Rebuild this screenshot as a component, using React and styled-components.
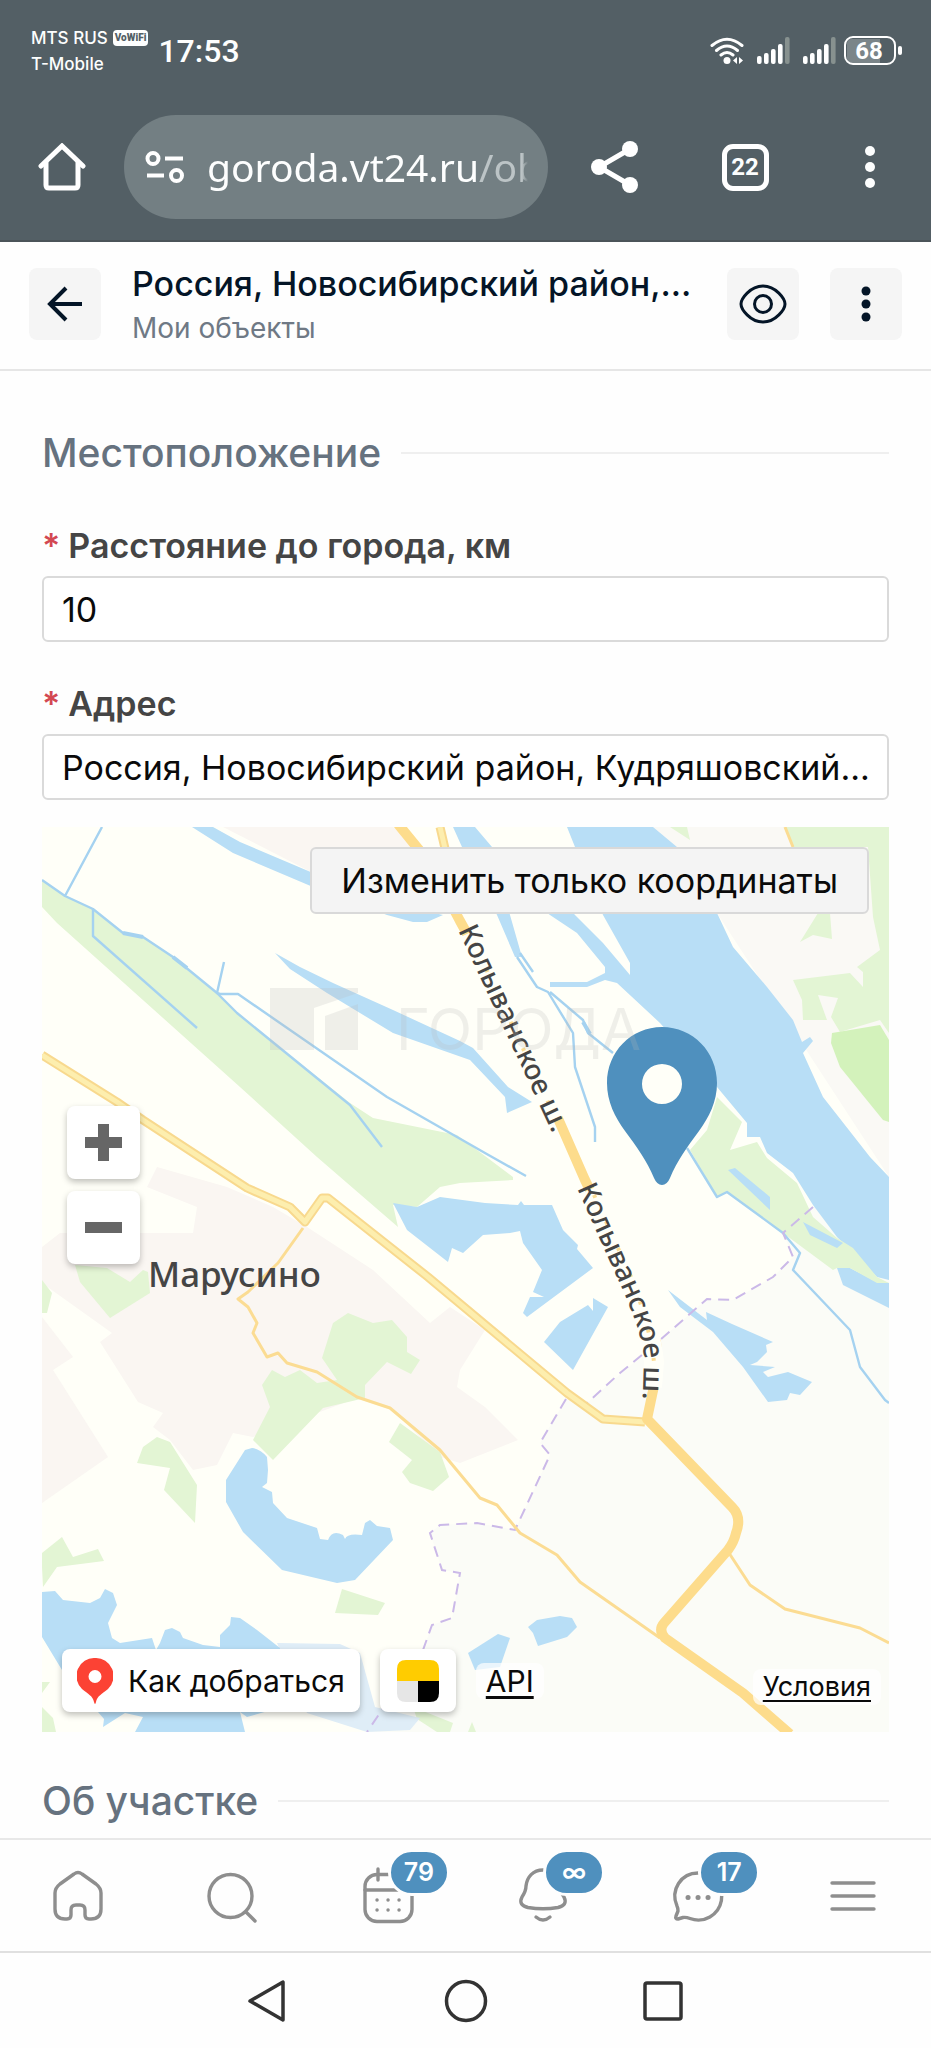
import styled, { createGlobalStyle } from 'styled-components'

const GlobalStyle = createGlobalStyle`
  * {
    box-sizing: border-box;
  }

  body {
    margin: 0;
    background: #fefefe;
    font-family: Inter, "Liberation Sans", sans-serif;
  }

  button, input {
    font-family: inherit;
    margin: 0;
  }
`

const Page = styled.div`
  display: flex;
  flex-direction: column;
  min-height: 100vh;
`

/* phone status bar and browser toolbar */

const BrowserTop = styled.header`
  background: #535f65;
  color: #fdfefe;
  font-family: Roboto, sans-serif;
  border-bottom: 2px solid #4b5459;
`

const StatusBar = styled.div`
  display: flex;
  align-items: center;
  height: 100px;
  padding: 2px 29px 0 31px;
`

const Carriers = styled.div`
  display: flex;
  flex-direction: column;
  font-family: Inter, sans-serif;
  font-size: 17px;
  font-weight: 500;
  line-height: 26px;
`

const Carrier = styled.div`
  display: flex;
  align-items: center;
  gap: 5px;
`

const WifiTag = styled.span`
  padding: 0 2px;
  border-radius: 4px;
  background: #fdfefe;
  color: #535f65;
  font-family: Roboto, sans-serif;
  font-size: 10px;
  font-weight: 900;
  line-height: 16px;
`

const Clock = styled.time`
  margin-left: 10px;
  font-size: 32px;
  font-weight: 500;
`

const StatusIcons = styled.div`
  display: flex;
  align-items: center;
  gap: 13px;
  margin-left: auto;
`

const Battery = styled.svg`
  margin-left: -5px;
`

const Toolbar = styled.div`
  display: grid;
  grid-template-columns: 124px 1fr 134px 126px 123px;
  align-items: center;
  padding: 15px 0 21px;
`

const ToolButton = styled.button`
  display: flex;
  justify-content: center;
  align-items: center;
  height: 104px;
  padding: 0;
  border: 0;
  background: none;
  color: inherit;
`

const TabCount = styled.span`
  width: 47px;
  height: 47px;
  border: 5px solid #fff;
  border-radius: 11px;
  font-size: 24px;
  font-weight: 700;
  line-height: 37px;
  text-align: center;
`

const AddressPill = styled.div`
  display: flex;
  align-items: center;
  gap: 22px;
  height: 104px;
  min-width: 0;
  padding: 0 20px 0 21px;
  border-radius: 52px;
  background: #737f83;
`

const Url = styled.div`
  flex: 1;
  overflow: hidden;
  white-space: nowrap;
  font-family: "Noto Sans", sans-serif;
  font-size: 39px;
  line-height: 60px;
  mask-image: linear-gradient(to left, transparent, #000 6px);

  span {
    color: #bcc4c6;
  }
`

/* app header */

const AppHeader = styled.header`
  display: flex;
  align-items: center;
  gap: 31px;
  padding: 22px 29px 25px;
  border-bottom: 2px solid #e6e6e6;
`

const SquareButton = styled.button`
  display: flex;
  flex: none;
  justify-content: center;
  align-items: center;
  width: 72px;
  height: 72px;
  padding: 0;
  border: 0;
  border-radius: 8px;
  background: #f5f5f5;
  color: #041527;
`

const Titles = styled.div`
  flex: 1;
  min-width: 0;
`

const Title = styled.h1`
  margin: 0;
  overflow: hidden;
  color: #041527;
  font-size: 34px;
  font-weight: 500;
  line-height: 40px;
  text-overflow: ellipsis;
  white-space: nowrap;
`

const Subtitle = styled.p`
  margin: 8px 0 0;
  color: #6f7985;
  font-size: 28px;
  line-height: 32px;
`

/* form */

const Form = styled.main`
  flex: 1;
  padding: 56px 42px 11px;
`

const SectionTitle = styled.h2`
  display: flex;
  align-items: center;
  gap: 20px;
  margin: 0;
  color: #66727f;
  font-size: 39px;
  font-weight: 500;
  line-height: 52px;

  &::after {
    content: '';
    flex: 1;
    height: 2px;
    background: #efefef;
  }
`

const Fields = styled.div`
  display: grid;
  gap: 40px;
  margin: 45px 0 27px;
`

const Field = styled.div`
  display: flex;
  flex-direction: column;
  gap: 8px;
`

const Label = styled.label`
  color: #454545;
  font-size: 34px;
  font-weight: 600;
  line-height: 44px;

  &::before {
    content: '*';
    margin-right: 8px;
    color: #d34852;
  }
`

const Input = styled.input`
  width: 100%;
  height: 66px;
  padding: 0 8px 0 18px;
  border: 2px solid #dadada;
  border-radius: 6px;
  background: #fff;
  color: #0a0a0a;
  font-size: 34px;
  text-overflow: ellipsis;
`

/* map */

const MapFrame = styled.section`
  position: relative;
  aspect-ratio: 847 / 905;
  margin-bottom: 43px;
  overflow: hidden;
  font-family: "Noto Sans", sans-serif;
`

const MapCanvas = styled.svg`
  display: block;
  width: 100%;
  height: 100%;
`

const EditCoords = styled.button`
  position: absolute;
  top: 20px;
  right: 20px;
  height: 67px;
  padding: 0 29px;
  border: 2px solid #d9d9d9;
  border-radius: 6px;
  background: #f4f4f4;
  color: #0a0a0a;
  font-family: Inter, sans-serif;
  font-size: 34px;
`

const Zoom = styled.div`
  position: absolute;
  top: 279px;
  left: 25px;
  display: grid;
  gap: 12px;
`

const ZoomButton = styled.button`
  display: flex;
  justify-content: center;
  align-items: center;
  width: 73px;
  height: 73px;
  padding: 0;
  border: 0;
  border-radius: 8px;
  background: #fff;
  box-shadow: 0 3px 6px rgba(0, 0, 0, 0.25);
`

const MapFooter = styled.div`
  position: absolute;
  right: 8px;
  bottom: 20px;
  left: 20px;
  display: flex;
  align-items: center;
`

const MapChip = styled.button`
  display: flex;
  align-items: center;
  gap: 15px;
  height: 63px;
  margin-right: 20px;
  padding: 0 15px;
  border: 0;
  border-radius: 8px;
  background: #fff;
  color: #0a0a0a;
  font-family: Inter, sans-serif;
  font-size: 30px;
  box-shadow: 0 3px 6px rgba(0, 0, 0, 0.25);
`

const MapLink = styled.a`
  margin: ${({ $end }) => ($end ? '12px 0 0 auto' : '0')};
  padding: 0 10px;
  border-radius: 8px;
  background: rgba(255, 255, 255, 0.7);
  color: #0a0a0a;
  font-family: Inter, sans-serif;
  font-size: ${({ $end }) => ($end ? '27px' : '30px')};
  line-height: 36px;
  text-underline-offset: 4px;
`

/* bottom bars */

const TabBar = styled.nav`
  position: sticky;
  bottom: 0;
  display: grid;
  grid-template-columns: repeat(6, 1fr);
  height: 115px;
  border-top: 2px solid #e8e8e8;
  border-bottom: 2px solid #e0e0e0;
  background: #fefefe;
`

const TabLink = styled.a`
  position: relative;
  display: flex;
  justify-content: center;
  align-items: center;
  color: #8e8e8e;
`

const Badge = styled.span`
  position: absolute;
  top: 9px;
  left: 50%;
  width: 62px;
  height: 47px;
  border: 3px solid #fefefe;
  border-radius: 24px;
  background: #4f90be;
  color: #fff;
  font-size: 25px;
  font-weight: 600;
  line-height: 41px;
  text-align: center;
`

const SystemBar = styled.div`
  display: flex;
  justify-content: center;
  gap: 151px;
  height: 95px;
  background: #fefefe;
`

const SystemButton = styled.button`
  display: flex;
  align-items: center;
  padding: 0;
  border: 0;
  background: none;
  color: #333;
`

const Signal = () => (
  <svg width="33" height="28" viewBox="0 0 33 28" aria-hidden="true">
    {[8, 11, 15, 20, 27].map((h, i) => (
      <rect key={h} x={i * 7} y={27 - h} width="4.6" height={h} rx="2" fill={i === 4 ? '#87918f' : '#fff'} />
    ))}
  </svg>
)

const Dots = ({ step, r }) => (
  <svg width="16" height="50" viewBox="0 0 16 50" fill="currentColor" aria-hidden="true">
    <circle cx="8" cy={25 - step} r={r} />
    <circle cx="8" cy="25" r={r} />
    <circle cx="8" cy={25 + step} r={r} />
  </svg>
)

const TabIcon = ({ children }) => (
  <svg width="60" height="60" viewBox="0 0 60 60" fill="none" stroke="currentColor" strokeWidth="3.4" strokeLinecap="round" strokeLinejoin="round" aria-hidden="true">
    {children}
  </svg>
)

const SystemIcon = ({ children }) => (
  <svg width="46" height="46" viewBox="0 0 46 46" fill="none" stroke="currentColor" strokeWidth="3.5" strokeLinejoin="round" aria-hidden="true">
    {children}
  </svg>
)

const WATER = [
  'M525 0H611L635 20L675 86L691 120L725 160L751 193L760 215L768 210L771 214L761 226L781 270L828 330L847 350V453L835 450L795 410L771 378L751 346L725 326L718 310L705 310V296L675 260L618 196L575 156L563 153L545 160H508V155H545L563 146V140L535 106L508 88L470 60H510L533 88L561 116L588 148V136L561 88L533 20Z',
  'M411 0H433L450 20L468 88L480 130L473 130L455 88L420 20Z',
  'M150 0H171L198 15L271 46L345 75L401 88L385 95H371L345 88L271 60L191 26Z',
  'M233 126L258 140L291 156L351 183L418 214L431 221L466 260L490 275L465 286L463 270L428 233L351 206L285 166L248 142Z',
  'M351 376L375 380L398 370L443 376L476 378L479 374L482 378H510L521 403L536 418L535 422L551 441L485 490L481 486L488 470L502 470L491 465L500 443L481 416L478 404L468 406L441 408L421 426L410 421L406 435L365 403Z',
  'M551 471L566 480L531 543L502 515L518 495L546 478L551 484Z',
  'M626 463L665 493L664 485L690 497L731 515L724 518L725 525L715 535L708 538L733 540L721 545L726 550L746 545L770 555L758 568L748 566L745 573L726 575L701 540L671 505L638 480Z',
  'M795 441H808L835 455L847 456V481L801 458Z',
  'M210 621Q218 622 225 630L226 643L225 656L220 660L230 665L231 676L245 691L275 701L278 712L286 713Q290 702 301 708L303 712Q305 706 320 708L323 696L328 693L335 699L348 701L351 713L313 753L295 756L240 743L201 705L184 675V653L203 623Z',
  'M0 765L13 764L21 773L48 776L58 771L63 762L71 766L75 778L66 796L70 811L78 816L110 811L114 823L118 816L123 803L130 801L138 805L141 811L161 818L178 820V808L188 798L189 790L198 791L215 803L238 821L240 880L205 890L198 885L203 905H93L101 890L83 886L61 900L62 892L20 843L0 810Z',
  'M456 807L468 811L458 840L433 843L426 826Z',
  'M486 800L495 793L518 789L530 791L535 800L525 810L496 819L491 806Z',
]

const GREEN = [
  'M0 53L23 69L51 82L81 106L101 110L131 130L175 166L195 186L308 276L331 291L415 308L471 350V353L418 356L398 360L375 380L351 378L356 400L275 330L198 260L15 96L0 80Z',
  'M33 438L65 441L88 455L101 443L106 445L108 466L68 491L38 455Z',
  'M0 453L10 466L5 486H0Z',
  'M306 486L331 496L350 493L365 510V525L378 533L369 547L345 535L323 558V571L281 581L231 633L211 613L228 580L220 558L230 543L243 550L258 543L275 556L295 553L280 531L291 496Z',
  'M115 610L128 615L155 658L153 696L122 663L128 641L95 636L101 620Z',
  'M358 596L398 625L407 650L391 664L368 656L360 645L370 633L347 615Z',
  'M0 726L20 710L31 730L56 722L62 734L15 740L1 760L0 740Z',
  'M300 762L343 776L336 788L293 786Z',
  'M371 880L411 896L408 905H395L375 892Z',
  'M0 880L11 891L14 905H0ZM0 855H8L0 866Z',
  'M426 905L430 895L434 905Z',
  'M743 0H847V206L838 193L798 205L789 190L796 171L776 168L785 193H761L760 173L751 153L808 146L821 160V145L815 140L838 123L831 90L826 20H751Z',
  'M776 86H788L790 112L771 108L758 115ZM628 0H645L648 13Z',
]

const GREENBELT = 'M675 270L700 295L688 323L715 315L725 331L755 356L771 390L795 411L811 421L835 450L847 456H835L808 441H795L791 443L741 406L685 366L675 370L648 323L665 303Z'

const BORDER = 'M771 380L741 406L751 430L731 450L691 473L665 472L618 513L578 546L545 576'
const BORDER_WEST = 'M524 572L498 616L508 628L473 703L435 696L398 698L388 706L400 743L418 746L410 791L390 798L381 823L340 883L325 905'

const WEST_ROAD = 'M0 228L75 275L101 293L205 361L248 380L263 395L280 371H286L386 450L525 566L561 592L603 595M398 0L405 30'

const MapDrawing = () => (
  <MapCanvas viewBox="0 0 847 905" preserveAspectRatio="xMidYMid slice" role="img" aria-label="Карта">
    <rect width="847" height="905" fill="#fffff8" />
    <path fill="#fbfcf7" d="M771 380L741 406L751 430L731 450L691 473L665 472L618 513L545 576L524 572L498 616L508 628L473 703L435 696L398 698L388 706L400 743L418 746L410 791L390 798L381 823L325 905H847V380Z" />
    <path fill="#faf9f5" d="M611 0H847V350L675 86Z" />
    <g fill="#faf6f2">
      <path d="M181 0H351L381 21L271 46Z" />
      <path d="M115 340L185 360L231 380L265 400L331 443L388 496L408 480L443 503L418 543L415 560L443 580L476 613L418 636L398 630L348 581L315 571L211 610L191 606L175 638L151 643L128 613L111 600L121 586L96 575L58 515L70 506L0 456V420L18 406L100 406L151 406L155 380L105 360Z" />
      <path d="M0 490L31 530L11 543L66 630L0 676Z" />
    </g>
    <path fill="#fffff8" d="M100 394L130 378L152 382L150 403L105 406Z" />
    <g fill="#e3f5d4">
      {GREEN.map((d) => <path key={d} d={d} />)}
    </g>
    <path fill="#d3f2bb" d="M790 206L838 198L847 213V295L841 293L798 240L789 216Z" />
    <path fill="#dfedf7" d="M235 816L298 817L318 826L333 880L378 891L368 903L325 905L265 886Z" />
    <g fill="#b8def6">
      {WATER.map((d) => <path key={d} d={d} />)}
    </g>
    <path fill="#e3f5d4" d={GREENBELT} />
    <path fill="#b8def6" d="M686 343L693 341L728 370V383ZM761 395L801 416L795 421L768 408Z" />

    <g fill="none" stroke="#a5d2f0" strokeWidth="2.4" strokeLinejoin="round">
      <path d="M60 0L23 69M0 53L23 69L51 82L81 106L101 110L131 130L175 166L195 186L308 278L340 320" />
      <path d="M51 82V109L155 201M182 135L175 166L178 167H196L345 270L443 326L484 349" />
      <path d="M475 130L495 160L506 165L531 206L533 240L553 300V315M508 165L541 193L546 206L571 226M478 126L491 145" />
      <path d="M645 321L675 370L685 365L741 406L758 426L751 443L808 503L818 540L843 573L847 576" />
    </g>
    <path fill="none" stroke="#a5d2f0" strokeWidth="4" d="M81 106L101 110M131 130L145 141M541 195L548 207" />

    <g fill="none" stroke="#cbb9e8" strokeWidth="2" strokeDasharray="11 7">
      <path d={BORDER} />
      <path d={BORDER_WEST} />
    </g>

    <g fill="none" stroke="#fbdc93" strokeWidth="3" strokeLinejoin="round">
      <path d="M261 401L236 436L206 465L196 472L206 480L215 496L211 506L225 530L236 526L245 536L275 545L315 570L348 581L398 623L438 671L455 678L478 706L515 728L538 755L618 811" />
      <path d="M687 726L708 758L743 782L818 801L847 816M743 0L751 20" />
    </g>
    <g fill="none" strokeLinejoin="round">
      <path stroke="#f8d98e" strokeWidth="9" d={WEST_ROAD} />
      <path stroke="#fdeeae" strokeWidth="5" d={WEST_ROAD} />
      <path stroke="#fddc8c" strokeWidth="10" d="M356 -3L378 24Q395 50 418 94L470 188L518 296L543 353L590 450L614 515L616 540L605 592L690 680Q700 690 694 706Q692 715 686 723L622 796Q616 803 623 811L701 866L748 907" />
    </g>

    {/* gap in the highway under its name */}
    <path fill="none" stroke="#fffff8" strokeWidth="20" d="M427 106L470 198L514 292M549 362L590 452Q608 500 612 535L610 560" />
    <g fill="none" stroke="#fbdc93" strokeWidth="4" strokeDasharray="3 26">
      <path d="M432 116L470 198L514 292M552 368L590 452Q608 500 612 535" />
    </g>
    <defs>
      <path id="highway-north" d="M416 103L515 316" />
      <path id="highway-south" d="M535 361L577 455Q600 505 602 530L600 595" />
    </defs>
    <g fill="#454545" fontSize="28" fontWeight="500">
      <text><textPath href="#highway-north">Колыванское ш.</textPath></text>
      <text><textPath href="#highway-south">Колыванское ш.</textPath></text>
      <text x="106" y="460" fontSize="35">Марусино</text>
    </g>

    <path
      fill="#4f90be"
      fillRule="evenodd"
      d="M620 200C589 200 565 225 565 256C565 275 573 290 583 304C595 320 605 334 612 351Q615 358 620 358Q625 358 628 351C635 334 645 320 657 304C667 290 675 275 675 256C675 225 651 200 620 200ZM620 237A20 20 0 1 1 620 277A20 20 0 1 1 620 237Z"
    />

    <g fill="#b9b9b9" opacity="0.22">
      <path d="M228 161H316V166L272 181V223H228ZM283 189L316 177V223H283Z" />
      <text x="354" y="223" fontFamily="Inter, sans-serif" fontSize="58">ГОРОДА</text>
    </g>
  </MapCanvas>
)

const tabs = [
  {
    label: 'Главная',
    icon: <path d="M26 8Q30 5 34 8L48 18Q53 22 53 27V43Q53 53 43 53H41Q37 53 37 49V44Q37 39 32 39H28Q23 39 23 44V49Q23 53 19 53H17Q7 53 7 43V27Q7 22 12 18Z" />,
  },
  {
    label: 'Поиск',
    icon: <><circle cx="27.5" cy="30" r="21.5" /><path d="M43 46L52 55" /></>,
  },
  {
    label: 'Календарь',
    badge: '79',
    icon: (
      <>
        <rect x="7" y="8.5" width="47" height="47" rx="12" />
        <path d="M7 24H54M20 3V14M41 3V14" />
        <path d="M19 34H19.1M30 34H30.1M41 34H41.1M19 44H19.1M30 44H30.1M41 44H41.1" />
      </>
    ),
  },
  {
    label: 'Уведомления',
    badge: '∞',
    icon: <path d="M30 4C20 4 14 11 13 20Q13 25 9 31C6 37 9 40 15 41.5Q30 44 45 41.5C51 40 54 37 51 31Q47 25 47 20C46 11 40 4 30 4ZM23 51Q30 57 37 51" />,
  },
  {
    label: 'Сообщения',
    badge: '17',
    icon: (
      <>
        <path d="M9 40C2 24 13 7 30 7A23.5 23.5 0 1 1 22 52.5Q18 51 15 51.5L10 53Q7 53 8 50L10 45Q10 42 9 40Z" />
        <path strokeWidth="5" d="M20 31.5H20.1M30 31.5H30.1M40 31.5H40.1" />
      </>
    ),
  },
  { label: 'Меню', icon: <path d="M9 17H51M9 30H51M9 43H51" /> },
]

const App = () => {
  return (
    <Page>
      <GlobalStyle />
      <BrowserTop>
        <StatusBar>
          <Carriers>
            <Carrier>MTS RUS <WifiTag>VoWiFi</WifiTag></Carrier>
            <Carrier>T-Mobile</Carrier>
          </Carriers>
          <Clock>17:53</Clock>
          <StatusIcons>
            <svg width="34" height="28" viewBox="0 0 34 28" fill="none" stroke="#fff" strokeWidth="3" strokeLinecap="round" aria-hidden="true">
              <path d="M2 8.5Q17-4 32 8.5M6.5 13.5Q17 4.5 27.5 13.5M11 18Q17 13 23 18" />
              <circle cx="17" cy="23.5" r="3.5" fill="#fff" stroke="none" />
              <path fill="#fff" stroke="none" d="M27 20V27L23 23.5ZM29 20V27L33 23.5Z" />
            </svg>
            <Signal />
            <Signal />
            <Battery width="58" height="30" viewBox="0 0 58 30" aria-hidden="true">
              <path fill="#7b8589" d="M8 3H36V27H8Q3 27 3 22V8Q3 3 8 3Z" />
              <rect x="1" y="1" width="50" height="27" rx="8" fill="none" stroke="#fff" strokeWidth="2" />
              <rect x="54" y="10" width="4" height="9" rx="2" fill="#fff" />
              <text x="25" y="23" fill="#fff" fontSize="24" fontWeight="700" textAnchor="middle">68</text>
            </Battery>
          </StatusIcons>
        </StatusBar>
        <Toolbar>
          <ToolButton aria-label="Домой">
            <svg width="48" height="48" viewBox="0 0 48 48" fill="none" stroke="#fff" strokeWidth="5" strokeLinecap="round" aria-hidden="true">
              <path d="M3 23L24 3L45 23" />
              <path d="M8 20V42Q8 45 11 45H37Q40 45 40 42V20" />
            </svg>
          </ToolButton>
          <AddressPill>
            <svg width="40" height="34" viewBox="0 0 40 34" fill="none" stroke="#fff" strokeWidth="4" aria-hidden="true">
              <circle cx="8" cy="8.5" r="5.5" />
              <path d="M20 8.5H38M2 25.5H19" />
              <circle cx="31.5" cy="25.5" r="5.5" />
            </svg>
            <Url>goroda.vt24.ru<span>/ob</span></Url>
          </AddressPill>
          <ToolButton aria-label="Поделиться">
            <svg width="48" height="54" viewBox="0 0 48 54" fill="#fff" aria-hidden="true">
              <path stroke="#fff" strokeWidth="5" fill="none" d="M39 9L8 27L39 45" />
              <circle cx="39" cy="9" r="8" />
              <circle cx="8" cy="27" r="8" />
              <circle cx="39" cy="45" r="8" />
            </svg>
          </ToolButton>
          <ToolButton aria-label="Вкладки"><TabCount>22</TabCount></ToolButton>
          <ToolButton aria-label="Меню браузера"><Dots step={16} r={5} /></ToolButton>
        </Toolbar>
      </BrowserTop>

      <AppHeader>
        <SquareButton aria-label="Назад">
          <svg width="36" height="36" viewBox="0 0 36 36" fill="none" stroke="currentColor" strokeWidth="4" aria-hidden="true">
            <path d="M35 18H3M19 2L3 18L19 34" />
          </svg>
        </SquareButton>
        <Titles>
          <Title>Россия, Новосибирский район,...</Title>
          <Subtitle>Мои объекты</Subtitle>
        </Titles>
        <SquareButton aria-label="Просмотр">
          <svg width="48" height="40" viewBox="0 0 48 40" fill="none" stroke="currentColor" strokeWidth="3" aria-hidden="true">
            <path d="M2 20C2 15 11 2 24 2S46 15 46 20S37 38 24 38S2 25 2 20Z" />
            <circle cx="24" cy="20" r="8.5" />
          </svg>
        </SquareButton>
        <SquareButton aria-label="Ещё"><Dots step={13} r={4.5} /></SquareButton>
      </AppHeader>

      <Form>
        <SectionTitle>Местоположение</SectionTitle>
        <Fields>
          <Field>
            <Label htmlFor="distance">Расстояние до города, км</Label>
            <Input id="distance" defaultValue="10" />
          </Field>
          <Field>
            <Label htmlFor="address">Адрес</Label>
            <Input id="address" defaultValue="Россия, Новосибирский район, Кудряшовский..." />
          </Field>
        </Fields>
        <MapFrame>
          <MapDrawing />
          <EditCoords>Изменить только координаты</EditCoords>
          <Zoom>
            <ZoomButton aria-label="Приблизить">
              <svg width="37" height="37" viewBox="0 0 37 37" aria-hidden="true"><path fill="#666" d="M13 0H24V13H37V24H24V37H13V24H0V13H13Z" /></svg>
            </ZoomButton>
            <ZoomButton aria-label="Отдалить">
              <svg width="37" height="37" viewBox="0 0 37 37" aria-hidden="true"><path fill="#666" d="M0 13H37V24H0Z" /></svg>
            </ZoomButton>
          </Zoom>
          <MapFooter>
            <MapChip>
              <svg width="36" height="46" viewBox="0 0 36 46" aria-hidden="true">
                <path fill="#fc4234" fillRule="evenodd" d="M18 0A18 18 0 0 0 5 31C11 36 16 38 17 44Q18 48 19 44C20 38 25 36 31 31A18 18 0 0 0 18 0ZM18 12A6.5 6.5 0 1 1 18 25A6.5 6.5 0 1 1 18 12Z" />
              </svg>
              Как добраться
            </MapChip>
            <MapChip aria-label="Такси">
              <svg width="46" height="42" viewBox="0 0 46 42" aria-hidden="true">
                <path fill="#fc0" d="M2 21V9Q2 0 11 0H35Q44 0 44 9V21Z" />
                <path fill="#e6e6e6" d="M2 21H23V42H11Q2 42 2 33Z" />
                <path d="M23 21H44V33Q44 42 35 42H23Z" />
              </svg>
            </MapChip>
            <MapLink href="#api">API</MapLink>
            <MapLink href="#terms" $end>Условия</MapLink>
          </MapFooter>
        </MapFrame>
        <SectionTitle>Об участке</SectionTitle>
      </Form>

      <TabBar>
        {tabs.map(({ label, badge, icon }) => (
          <TabLink key={label} href="#" aria-label={label}>
            <TabIcon>{icon}</TabIcon>
            {badge && <Badge>{badge}</Badge>}
          </TabLink>
        ))}
      </TabBar>
      <SystemBar>
        <SystemButton aria-label="Назад">
          <SystemIcon><path d="M37 4V42L4 23Z" /></SystemIcon>
        </SystemButton>
        <SystemButton aria-label="Домой">
          <SystemIcon><circle cx="23" cy="23" r="19.5" /></SystemIcon>
        </SystemButton>
        <SystemButton aria-label="Недавние">
          <SystemIcon><rect x="5" y="5" width="36" height="36" rx="2" /></SystemIcon>
        </SystemButton>
      </SystemBar>
    </Page>
  )
}

export default App
